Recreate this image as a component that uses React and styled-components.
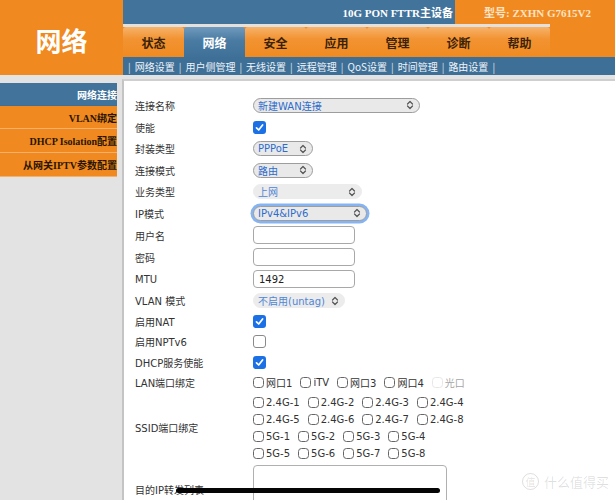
import React from "react";
import styled, { createGlobalStyle } from "styled-components";

const GlobalStyle = createGlobalStyle`
  html, body { margin: 0; padding: 0; background: #fff; }
  body { font-family: "DejaVu Sans", "Noto Sans CJK SC", sans-serif; }
`;

const Page = styled.div`
  position: relative;
  width: 615px;
  height: 500px;
  overflow: hidden;
  background: #e3e3e3;
`;

const Header = styled.div`
  display: grid;
  grid-template-columns: 123px 1fr;
  height: 75px;
`;

const Logo = styled.div`
  background: #f08a20;
  color: #fff;
  font: bold 26px "Noto Sans CJK SC", sans-serif;
  display: flex;
  align-items: center;
  justify-content: center;
  padding-top: 4px;
`;

const HeaderRight = styled.div`
  display: flex;
  flex-direction: column;
`;

const TopStrip = styled.div`
  display: flex;
  height: 24px;
  font: bold 11px "Liberation Serif", "Noto Sans CJK SC", serif;
`;

const Product = styled.div`
  width: 332px;
  background: #41739b;
  color: #fff;
  display: flex;
  align-items: center;
  justify-content: flex-end;
  padding-right: 2px;
  box-sizing: border-box;
`;

const ModelNo = styled.div`
  flex: 1;
  background: #f08a20;
  color: #fde3c4;
  display: flex;
  align-items: center;
  padding-left: 29px;
`;

const TabBar = styled.div`
  display: flex;
  height: 33px;
  background: #f08a20;
`;

const Tabs = styled.div`
  display: flex;
  border-top: 3px solid #e4e1dd;
`;

const Tab = styled.div`
  width: 61px;
  display: flex;
  align-items: center;
  justify-content: center;
  font: bold 12px "Noto Sans CJK SC", sans-serif;
  color: ${(p) => (p.$active ? "#fff" : "#3a2208")};
  border-radius: 3px 3px 0 0;
  background: ${(p) =>
    p.$active
      ? "linear-gradient(#6f9abd, #4a7ba2 45%, #3f7098)"
      : "linear-gradient(#f7b36b, #f29332 40%, #f08a20)"};
`;

const SubNav = styled.div`
  height: 18px;
  background: #3e6f96;
  color: #eef4fa;
  font: 10px "Noto Sans CJK SC", sans-serif;
  display: flex;
  align-items: center;
  padding-left: 1px;
  white-space: nowrap;
`;

const Sep = styled.span`
  margin: 0 4px;
  opacity: 0.85;
`;

const Body = styled.div`
  display: grid;
  grid-template-columns: 117px 1fr;
  column-gap: 5px;
  height: 425px;
`;

const Sidebar = styled.div`
  margin-top: 8px;
  display: flex;
  flex-direction: column;
`;

const SideItem = styled.div`
  height: ${(p) => p.$h}px;
  display: flex;
  align-items: center;
  justify-content: flex-end;
  white-space: nowrap;
  border-bottom: 1px solid ${(p) => (p.$active ? "#3e6f96" : "#f6b06a")};
  background: ${(p) => (p.$active ? "#41739b" : "#f08a20")};
  color: ${(p) => (p.$active ? "#fff" : "#2a1400")};
  font: bold 10px ${(p) =>
    p.$active ? `"Noto Sans CJK SC", sans-serif` : `"Liberation Serif", "Noto Sans CJK SC", serif`};
`;

const Content = styled.div`
  margin-top: 4px;
  background: #fff;
  border-top: 2px solid #cfcfcf;
  border-left: 2px solid #c4c4c4;
  padding: 13px 0 0 11px;
`;

const Row = styled.div`
  display: grid;
  grid-template-columns: 118px 1fr;
  grid-template-rows: ${(p) => p.$h}px;
  align-items: center;
  height: ${(p) => p.$h}px;
  margin-top: ${(p) => p.$mt || 0}px;
`;

const Label = styled.div`
  font-size: 10px;
  color: #333;
  white-space: nowrap;
`;

const SelectBox = styled.div`
  box-sizing: border-box;
  width: ${(p) => p.$w}px;
  height: 15px;
  border-radius: 8px;
  border: 1px solid ${(p) => (p.$plain ? "#ececec" : "#9d9d9d")};
  background: ${(p) => (p.$plain ? "#ececec" : "#e9e9e9")};
  color: ${(p) => (p.$plain ? "#4f86d6" : "#2d6ccc")};
  font-size: 10px;
  display: flex;
  align-items: center;
  justify-content: space-between;
  padding: 0 5px 0 4px;
  box-shadow: ${(p) => (p.$focus ? "0 0 0 2.5px #86b3f2" : "none")};
  white-space: nowrap;
`;

const Chevron = () => (
  <svg width="8" height="10" viewBox="0 0 8 10">
    <path d="M1.5 4 L4 1.5 L6.5 4 M1.5 6 L4 8.5 L6.5 6" fill="none" stroke="#555" strokeWidth="1.2" strokeLinecap="round" strokeLinejoin="round" />
  </svg>
);

const Select = ({ w, plain, focus, children }) => (
  <SelectBox $w={w} $plain={plain} $focus={focus}>
    <span>{children}</span>
    <Chevron />
  </SelectBox>
);

const Check = styled.div`
  box-sizing: border-box;
  width: 13px;
  height: 13px;
  border-radius: 3px;
  background: ${(p) => (p.$on ? "#1c70e6" : "#fff")};
  border: ${(p) => (p.$on ? "none" : "1px solid #8a8a8a")};
  display: flex;
  align-items: center;
  justify-content: center;
`;

const Checkbox = ({ on }) => (
  <Check $on={on}>
    {on && (
      <svg width="9" height="9" viewBox="0 0 9 9">
        <path d="M1.5 4.8 L3.7 7 L7.6 2" fill="none" stroke="#fff" strokeWidth="1.7" strokeLinecap="round" strokeLinejoin="round" />
      </svg>
    )}
  </Check>
);

const TextInput = styled.div`
  box-sizing: border-box;
  width: 102px;
  height: 18px;
  border: 1px solid #a8a8a8;
  border-radius: 4px;
  font-size: 10px;
  color: #222;
  display: flex;
  align-items: center;
  padding-left: 5px;
`;

const Options = styled.div`
  display: flex;
  flex-direction: column;
  justify-content: center;
`;

const OptLine = styled.div`
  display: flex;
  align-items: center;
  height: 17px;
`;

const Opt = styled.div`
  display: flex;
  align-items: center;
  margin-right: 8px;
  font-size: 10px;
  color: #333;
  opacity: ${(p) => (p.$faded ? 0.45 : 1)};
`;

const Box = styled.span`
  box-sizing: border-box;
  width: 11px;
  height: 11px;
  border: 1px solid ${(p) => (p.$faded ? "#ccc" : "#666")};
  border-radius: 3.5px;
  margin-right: 2px;
`;

const Area = styled.div`
  box-sizing: border-box;
  width: 194px;
  height: 60px;
  align-self: start;
  border: 1px solid #b0b0b0;
  border-radius: 4px;
`;

const HomeBar = styled.div`
  position: absolute;
  left: 176px;
  top: 488px;
  width: 264px;
  height: 5px;
  border-radius: 3px;
  background: #050505;
`;

const Watermark = styled.div`
  position: absolute;
  right: 6px;
  bottom: 9px;
  display: flex;
  align-items: center;
  gap: 5px;
  color: rgba(0, 0, 0, 0.13);
  font: 13px "Noto Sans CJK SC", sans-serif;
  span:first-child {
    width: 15px;
    height: 15px;
    border: 1.5px solid rgba(0, 0, 0, 0.13);
    border-radius: 50%;
    font-size: 10px;
    display: flex;
    align-items: center;
    justify-content: center;
  }
`;

const tabs = ["状态", "网络", "安全", "应用", "管理", "诊断", "帮助"];
const subLinks = ["网络设置", "用户侧管理", "无线设置", "远程管理", "QoS设置", "时间管理", "路由设置"];
const lanPorts = [["网口1"], ["iTV"], ["网口3"], ["网口4"], ["光口", true]];
const ssidLines = [
  ["2.4G-1", "2.4G-2", "2.4G-3", "2.4G-4"],
  ["2.4G-5", "2.4G-6", "2.4G-7", "2.4G-8"],
  ["5G-1", "5G-2", "5G-3", "5G-4"],
  ["5G-5", "5G-6", "5G-7", "5G-8"],
];

export default function App() {
  return (
    <Page>
      <GlobalStyle />
      <Header>
        <Logo>网络</Logo>
        <HeaderRight>
          <TopStrip>
            <Product>10G PON FTTR主设备</Product>
            <ModelNo>型号: ZXHN G7615V2</ModelNo>
          </TopStrip>
          <TabBar>
            <Tabs>
              {tabs.map((t) => (
                <Tab key={t} $active={t === "网络"}>
                  {t}
                </Tab>
              ))}
            </Tabs>
          </TabBar>
          <SubNav>
            <Sep>|</Sep>
            {subLinks.map((s) => (
              <React.Fragment key={s}>
                {s}
                <Sep>|</Sep>
              </React.Fragment>
            ))}
          </SubNav>
        </HeaderRight>
      </Header>
      <Body>
        <Sidebar>
          <SideItem $h={22} $active>
            网络连接
          </SideItem>
          <SideItem $h={22}>VLAN绑定</SideItem>
          <SideItem $h={23}>DHCP Isolation配置</SideItem>
          <SideItem $h={23}>从网关IPTV参数配置</SideItem>
        </Sidebar>
        <Content>
          <Row $h={22}>
            <Label>连接名称</Label>
            <Select w={167}>新建WAN连接</Select>
          </Row>
          <Row $h={22}>
            <Label>使能</Label>
            <Checkbox on />
          </Row>
          <Row $h={21}>
            <Label>封装类型</Label>
            <Select w={60}>PPPoE</Select>
          </Row>
          <Row $h={22}>
            <Label>连接模式</Label>
            <Select w={60}>路由</Select>
          </Row>
          <Row $h={21}>
            <Label>业务类型</Label>
            <Select w={109} plain>
              上网
            </Select>
          </Row>
          <Row $h={22}>
            <Label>IP模式</Label>
            <Select w={114} focus>
              IPv4&amp;IPv6
            </Select>
          </Row>
          <Row $h={22}>
            <Label>用户名</Label>
            <TextInput />
          </Row>
          <Row $h={22}>
            <Label>密码</Label>
            <TextInput />
          </Row>
          <Row $h={22}>
            <Label>MTU</Label>
            <TextInput>1492</TextInput>
          </Row>
          <Row $h={21}>
            <Label>VLAN 模式</Label>
            <Select w={92} plain>
              不启用(untag)
            </Select>
          </Row>
          <Row $h={20}>
            <Label>启用NAT</Label>
            <Checkbox on />
          </Row>
          <Row $h={21}>
            <Label>启用NPTv6</Label>
            <Checkbox />
          </Row>
          <Row $h={20}>
            <Label>DHCP服务使能</Label>
            <Checkbox on />
          </Row>
          <Row $h={21}>
            <Label>LAN端口绑定</Label>
            <OptLine>
              {lanPorts.map(([name, faded]) => (
                <Opt key={name} $faded={faded}>
                  <Box $faded={faded} />
                  {name}
                </Opt>
              ))}
            </OptLine>
          </Row>
          <Row $h={69}>
            <Label>SSID端口绑定</Label>
            <Options>
              {ssidLines.map((line, i) => (
                <OptLine key={i}>
                  {line.map((n) => (
                    <Opt key={n}>
                      <Box />
                      {n}
                    </Opt>
                  ))}
                </OptLine>
              ))}
            </Options>
          </Row>
          <Row $h={48} $mt={3}>
            <Label>目的IP转发列表</Label>
            <Area />
          </Row>
        </Content>
      </Body>
      <HomeBar />
      <Watermark>
        <span>值</span>
        <span>什么值得买</span>
      </Watermark>
    </Page>
  );
}
